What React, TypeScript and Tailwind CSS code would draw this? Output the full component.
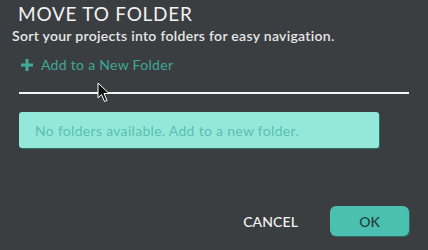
import React from 'react';

const font = { fontFamily: 'Lato, "Open Sans", sans-serif' };

const Cursor = () => (
  <svg className="absolute left-[97px] top-[82px]" width="14" height="21" viewBox="0 0 14 21">
    <path d="M1 1 L1 16 L4.5 12.5 L7.5 19.5 L10 18.5 L7 11.5 L12 11.5 Z" fill="#111" stroke="#fff" strokeWidth="1" strokeLinejoin="round" />
  </svg>
);

const MoveToFolderDialog: React.FC = () => {
  return (
    <div className="relative h-[250px] w-[428px] overflow-hidden bg-[#3b3e41] text-[#ececec]" style={font}>
      <div className="flex h-full flex-col">
        <h1 className="pl-[18px] pt-[3px] text-[19px] leading-[22px] tracking-[0.75px] text-[#f2f2f2]">MOVE TO FOLDER</h1>
        <p className="pl-[12px] pt-[2px] text-[14px] leading-[18px] font-semibold tracking-[0.3px] text-[#e6e6e6]">
          Sort your projects into folders for easy navigation.
        </p>
        <button className="ml-[21px] mt-[11px] flex items-center gap-[8px] self-start text-[14px] leading-[18px] tracking-[0.3px] text-[#3ea797]">
          <svg width="12" height="12" viewBox="0 0 12 12">
            <rect x="4.5" y="0" width="3" height="12" fill="#40ab9b" />
            <rect x="0" y="4.5" width="12" height="3" fill="#40ab9b" />
          </svg>
          Add to a New Folder
        </button>
        <div className="ml-[19px] mr-[19px] mt-[18px] h-[2px] bg-[#f4f4f4]" />
        <div className="ml-[19px] mt-[18px] flex h-[36px] w-[360px] items-center rounded-[3px] bg-[#94e8da] pl-[16px] text-[14px] tracking-[0.3px] text-[#5bbfb0] shadow-[1px_1px_0_#2c6e65]">
          No folders available. Add to a new folder.
        </div>
        <div className="mt-auto mb-[14px] mr-[19px] flex items-center justify-end gap-[32px]">
          <button className="text-[14px] font-medium tracking-[0.1px] text-[#f4f4f4]">CANCEL</button>
          <button className="h-[30px] w-[79px] rounded-[6px] bg-[#4bc0b1] text-[14px] font-medium text-[#1e3f3b] shadow-[1px_1px_0_#2c6e65]">
            OK
          </button>
        </div>
      </div>
      <Cursor />
    </div>
  );
};

export default function App() {
  return <MoveToFolderDialog />;
}
